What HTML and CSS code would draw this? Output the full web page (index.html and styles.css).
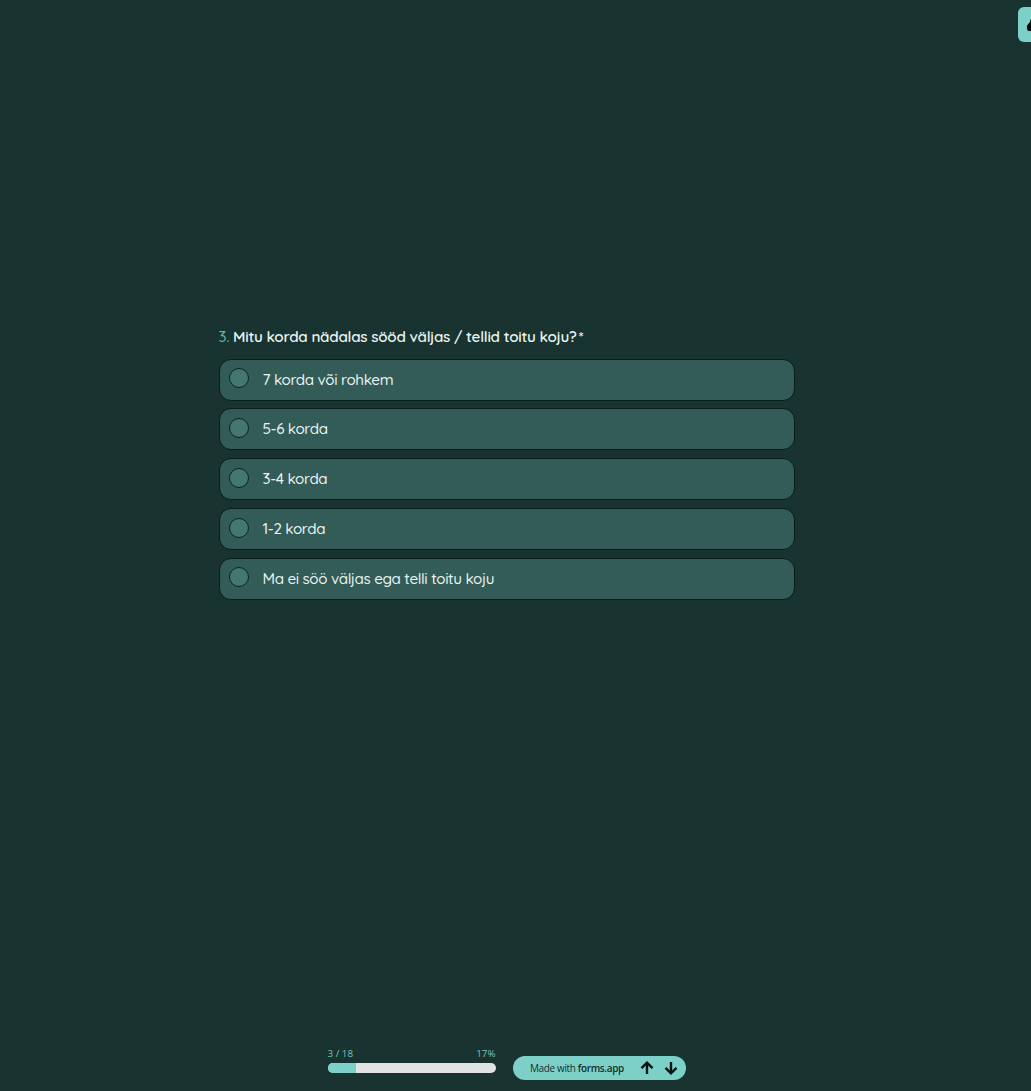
FILE: index.html
```html
<!DOCTYPE html>
<html lang="et">
<head>
<meta charset="utf-8">
<title>Küsimus 3</title>
<link rel="stylesheet" href="styles.css">
</head>
<body>
<main class="page">
  <div class="corner">
    <svg width="26" height="34" viewBox="0 0 26 34"><path d="M9 21C8 17 12 17.500 12.500 12.500L18 9V24H11Q9 24 9 21Z" fill="#020807"/></svg>
  </div>
  <section class="question">
    <h1 class="title"><span class="number">3.</span> <span class="prompt">Mitu korda nädalas sööd väljas / tellid toitu koju?</span><span class="required">*</span></h1>
    <div class="options">
      <label class="option"><span class="radio"></span><span class="text">7 korda või rohkem</span></label>
      <label class="option"><span class="radio"></span><span class="text">5-6 korda</span></label>
      <label class="option"><span class="radio"></span><span class="text">3-4 korda</span></label>
      <label class="option"><span class="radio"></span><span class="text">1-2 korda</span></label>
      <label class="option"><span class="radio"></span><span class="text">Ma ei söö väljas ega telli toitu koju</span></label>
    </div>
  </section>
  <footer class="footer">
    <div class="progress">
      <div class="counts"><span>3 / 18</span><span>17%</span></div>
      <div class="track"><div class="fill" style="width:17%"></div></div>
    </div>
    <div class="pill">
      <span class="made">Made with <b>forms.app</b></span>
      <svg class="arrow" width="14" height="14" viewBox="0 0 14 14"><path d="M7 13V2M1.500 7.200L7 1.700L12.500 7.200"/></svg>
      <svg class="arrow down" width="14" height="14" viewBox="0 0 14 14"><path d="M7 1V12M1.500 6.800L7 12.300L12.500 6.800"/></svg>
    </div>
  </footer>
</main>
</body>
</html>
```
FILE: styles.css
```css
* { box-sizing: border-box; }
body { margin: 0; background: #183330; color: #e9f3f1; font-family: Quicksand, Lato, sans-serif; }
.page { height: 1091px; display: flex; flex-direction: column; overflow: hidden; position: relative; }
.corner { position: absolute; top: 7px; right: -9px; width: 22px; height: 35px; border-radius: 6px; background: #7dd0c7; overflow: hidden; }
.corner svg { display: block; }
.question { width: 576px; margin: 325px 0 0 218.500px; }
.title { display: flex; align-items: baseline; margin: 0; height: 33.500px; font-size: 15.200px; line-height: 24px; font-weight: 600; white-space: nowrap; }
.number { width: 14.500px; color: #62b5a2; font-weight: 500; }
.prompt { letter-spacing: -.28px; }
.required { margin-left: 2px; font-size: 15px; }
.options { display: flex; flex-direction: column; gap: 7.800px; }
.option { display: flex; align-items: center; height: 42px; padding-left: 9px; border: 1px solid #061d1b; border-radius: 12px; background: #335c58; }
.radio { width: 20px; height: 20px; margin: -2.500px 14px 0 0; border: 1px solid #08231f; border-radius: 50%; background: #437770; }
.text { font-size: 15.200px; line-height: 24px; font-weight: 500; letter-spacing: -.37px; white-space: nowrap; }
.footer { display: flex; align-items: flex-end; gap: 17px; margin: auto 0 11px 327.500px; font-family: "Open Sans", sans-serif; }
.progress { width: 168px; padding-bottom: 7px; }
.counts { display: flex; justify-content: space-between; color: #7bc5b8; font-size: 9.800px; line-height: 14px; margin-bottom: 2.500px; }
.track { height: 10px; border-radius: 5px; overflow: hidden; background: #e0e2e4; }
.fill { height: 10px; background: #7dd0c7; }
.pill { display: flex; align-items: center; width: 173px; height: 24px; padding-left: 17.500px; border-radius: 12px; background: #7dd0c7; color: #15302d; }
.made { width: 110px; font-size: 10px; letter-spacing: -.37px; padding-bottom: 1px; white-space: nowrap; }
.made b { font-weight: 600; }
.arrow { fill: none; stroke: #041512; stroke-width: 2.400; }
.down { margin-left: 10px; }
```
